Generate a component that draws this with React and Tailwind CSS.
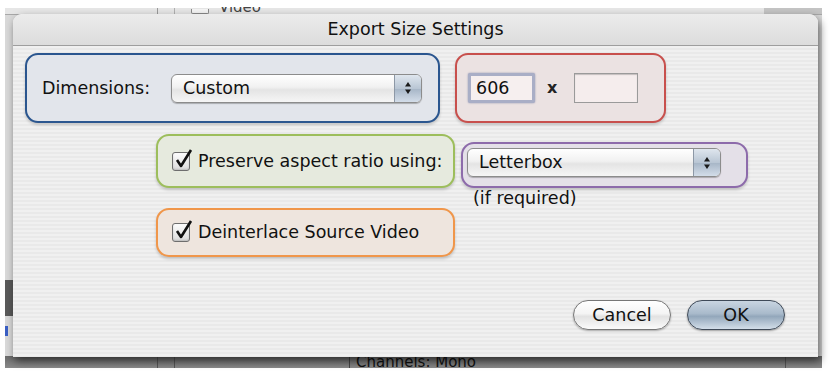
import React from 'react';

const font = { fontFamily: '"DejaVu Sans", "Liberation Sans", sans-serif' };

const Stepper = () => (
  <svg width="8" height="16" viewBox="0 0 8 16">
    <path d="M4 2 L7 6.5 L1 6.5 Z" fill="#1a1a1a" />
    <path d="M4 14 L7 9.5 L1 9.5 Z" fill="#1a1a1a" />
  </svg>
);

const PopUp = ({ label, className }) => (
  <div
    className={`flex h-[29px] items-stretch overflow-hidden rounded-[6px] border border-[#8c8c8c] bg-[linear-gradient(#ffffff,#f1f1f1_45%,#e4e4e4_55%,#f6f6f6)] shadow-[0_1px_1px_rgba(0,0,0,0.25)] ${className}`}
  >
    <div className="flex flex-1 items-center pl-[11px] text-[17.5px] text-[#111]">{label}</div>
    <div className="flex w-[27px] items-center justify-center border-l border-[#8d98a6] bg-[linear-gradient(#dfe6ee,#b9c6d4_50%,#a7b6c7_52%,#d3dde9)]">
      <Stepper />
    </div>
  </div>
);

const Checkbox = () => (
  <div className="relative h-[19px] w-[18px] rounded-[3px] border border-[#6e6e6e] bg-[linear-gradient(#fdfdfd,#dcdcdc)] shadow-[inset_0_-1px_2px_rgba(0,0,0,0.15)]">
    <svg className="absolute -top-[5px] left-[1px]" width="20" height="22" viewBox="0 0 20 22">
      <path d="M3 12 L7 18 L17 2" fill="none" stroke="#111" strokeWidth="2.6" strokeLinejoin="round" />
    </svg>
  </div>
);

const Group = ({ className, children }) => (
  <div className={`flex items-center rounded-[13px] border-2 shadow-[0_2px_3px_rgba(0,0,0,0.18)] ${className}`}>
    {children}
  </div>
);

export default function App() {
  return (
    <div className="relative h-[383px] w-[836px] overflow-hidden bg-white text-[17.5px]" style={font}>
      {/* window behind the sheet */}
      <div className="absolute left-[5px] top-[8px] h-[360px] w-[817px] bg-[#d9d9d9]">
        <div className="flex h-[7px] items-end border-b border-[#a8a8a8] bg-[#e6e6e6]">
          <div className="ml-[152px] h-full w-px bg-[#9a9a9a]" />
          <div className="ml-[16px] h-full w-px bg-[#b0b0b0]" />
          <div className="ml-[16px] h-[5px] w-[18px] rounded-b-[2px] border border-t-0 border-[#8a8a8a] bg-[#f4f4f4]" />
          <div className="ml-[10px] h-[7px] overflow-hidden text-[15px] leading-[0px] text-[#444]">Video</div>
          <div className="ml-auto h-full w-[58px] bg-[#c4c4c4]" />
        </div>
        <div className="absolute bottom-0 left-0 flex h-[12px] w-full items-start bg-[linear-gradient(#6a6a6a,#8a8a8a)]">
          <div className="ml-[152px] h-full w-px bg-[#555]" />
          <div className="ml-[16px] h-full w-px bg-[#555]" />
          <div className="ml-[174px] h-full w-px bg-[#444]" />
          <div className="ml-[6px] -mt-[1px] text-[15px] leading-[14px] text-[#111]">Channels: Mono</div>
          <div className="ml-auto mr-[36px] h-full w-px bg-[#555]" />
        </div>
        <div className="absolute left-0 top-[272px] h-[36px] w-[8px] bg-[#5a5a5a]" />
        <div className="absolute left-0 top-[318px] h-[10px] w-[3px] bg-[#3b5fc4]" />
      </div>

      {/* sheet */}
      <div className="absolute left-[13px] top-[14px] flex h-[343px] w-[805px] flex-col overflow-hidden rounded-t-[9px] bg-[repeating-linear-gradient(#f0f0f0_0px,#f0f0f0_2px,#e9e9e9_2px,#e9e9e9_4px)] text-[#111] shadow-[2px_4px_8px_rgba(0,0,0,0.55)]">
        <div className="flex h-[32px] shrink-0 items-center justify-center border-b border-[#9e9e9e] bg-[linear-gradient(#ececec,#dcdcdc)]">
          Export Size Settings
        </div>

        <div className="mt-[7px] flex items-start gap-[15px] pl-[12px]">
          <Group className="h-[70px] w-[415px] border-[#2b568f] bg-[#e2e5eb] pl-[15px]">
            <span className="w-[129px] shrink-0">Dimensions:</span>
            <PopUp label="Custom" className="w-[251px]" />
          </Group>
          <Group className="h-[70px] w-[211px] border-[#c8504d] bg-[#ebe2e2] pl-[11px]">
            <div className="flex h-[30px] w-[67px] items-center rounded-[2px] border-[3px] border-[#a9aec6] bg-[#f6efef] pl-[5px] shadow-[0_0_2px_#8d93b0]">
              606
            </div>
            <span className="ml-[12px] text-[16px] font-bold text-[#222]">x</span>
            <div className="ml-[17px] h-[30px] w-[64px] border border-[#9a9a9a] bg-[#f5eded] shadow-[inset_0_1px_1px_rgba(0,0,0,0.2)]" />
          </Group>
        </div>

        <div className="mt-[11px] flex h-[54px] items-start pl-[143px]">
          <Group className="h-[54px] w-[299px] border-[#9dbe5c] bg-[#e6eade] pl-[14px]">
            <Checkbox />
            <span className="ml-[8px] whitespace-nowrap">Preserve aspect ratio using:</span>
          </Group>
          <div className="ml-[6px] mt-[8px] flex flex-col">
            <Group className="h-[46px] w-[287px] items-start border-[#8d6bab] bg-[#e4e0e8] pl-[4px] pt-[4px]">
              <PopUp label="Letterbox" className="w-[254px]" />
            </Group>
            <span className="ml-[12px] leading-[20px]">(if required)</span>
          </div>
        </div>

        <div className="mt-[20px] flex pl-[143px]">
          <Group className="h-[49px] w-[299px] border-[#f0964a] bg-[#eee5de] pl-[14px]">
            <Checkbox />
            <span className="ml-[8px]">Deinterlace Source Video</span>
          </Group>
        </div>

        <div className="mt-auto mb-[27px] flex justify-end gap-[16px] pr-[33px]">
          <button className="h-[30px] w-[98px] rounded-full border border-[#777] bg-[linear-gradient(#ffffff,#f4f4f4_45%,#e2e2e2_55%,#fbfbfb)] text-[17.5px] text-[#111] shadow-[0_1px_2px_rgba(0,0,0,0.3)]">
            Cancel
          </button>
          <button className="h-[30px] w-[98px] rounded-full border border-[#3f4a58] bg-[linear-gradient(#c9d5e1,#a9bacb_45%,#93a7bb_55%,#d3dee9)] text-[17.5px] text-[#111] shadow-[0_1px_2px_rgba(0,0,0,0.35)]">
            OK
          </button>
        </div>
      </div>
    </div>
  );
}
